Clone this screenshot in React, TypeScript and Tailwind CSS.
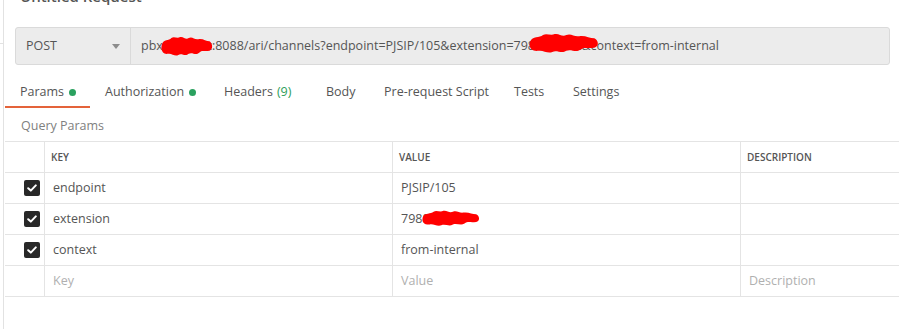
import React from 'react';

const tabs = [
  { label: 'Params', dot: true, w: 'w-[85px]', active: true },
  { label: 'Authorization', dot: true, w: 'w-[119px]' },
  { label: 'Headers', count: '(9)', w: 'w-[102px]' },
  { label: 'Body', w: 'w-[58px]' },
  { label: 'Pre-request Script', w: 'w-[130px]' },
  { label: 'Tests', w: 'w-[59px]' },
  { label: 'Settings', w: 'w-[90px]' },
];

const rows = [
  { key: 'endpoint', value: 'PJSIP/105' },
  { key: 'extension', value: '7988', redacted: true },
  { key: 'context', value: 'from-internal' },
];

function Scribble({ className }: { className: string }) {
  return (
    <svg className={className} viewBox="0 0 60 20" preserveAspectRatio="none">
      <path
        d="M1 8 C3 3 9 5 12 2 C15 0 19 3 22 1 C26 0 28 4 32 2 C36 0 39 4 43 3 C48 2 52 5 56 5 C60 7 60 13 56 14 C50 15 47 13 44 16 C40 19 36 15 32 17 C28 20 24 16 20 18 C16 20 12 16 8 17 C3 18 -1 14 1 8 Z"
        fill="#ff0000"
      />
    </svg>
  );
}

function Check() {
  return (
    <div className="w-4 h-4 rounded-[2px] bg-[#282828] flex items-center justify-center">
      <svg width="10" height="8" viewBox="0 0 10 8">
        <path d="M1.2 4.2 L3.8 6.6 L8.8 1.4" stroke="#fff" strokeWidth="2" fill="none" strokeLinecap="round" strokeLinejoin="round" />
      </svg>
    </div>
  );
}

export default function App() {
  return (
    <div className="w-[899px] h-[329px] overflow-hidden bg-white font-['Open_Sans',_sans-serif] text-[#555555] relative">
      {/* left pane edge */}
      <div className="absolute left-0 top-[43px] w-[4px] border-t border-[#e2e2e2]" />
      <div className="ml-[3px] h-full border-l border-[#e2e2e2] pl-[1px]">
        {/* title, scrolled mostly out of view */}
        <div className="h-[27px] overflow-hidden">
          <div className="-mt-[14px] pl-[15px] text-[15px] font-semibold leading-[20px]">Untitled Request</div>
        </div>

        {/* url bar */}
        <div className="relative ml-[10px] w-[875px] h-[38px] flex bg-[#ececec] border border-[#dadada] rounded-[3px] text-[12.5px]">
          <div className="w-[115px] flex items-center justify-between pl-[10px] pr-[10px] border-r border-[#dadada]">
            <span>POST</span>
            <svg width="8" height="5" viewBox="0 0 8 5">
              <path d="M0 0 H8 L4 5 Z" fill="#8c8c8c" />
            </svg>
          </div>
          <div className="flex items-center pl-[10px] whitespace-nowrap">
            pbx.xxxxxxx:8088/ari/channels?endpoint=PJSIP/105&amp;extension=7988xxxxxx&amp;context=from-internal
          </div>
          <Scribble className="absolute left-[145px] top-[8px] w-[52px] h-[21px]" />
          <Scribble className="absolute left-[513px] top-[5px] w-[70px] h-[21px]" />
        </div>

        {/* tabs */}
        <div className="flex h-[43px] pt-[14px] text-[12.5px]">
          {tabs.map((t) => (
            <div key={t.label} className={`${t.w} shrink-0 flex flex-col`}>
              <div className="flex-1 flex items-center pl-[15px] gap-[5px] whitespace-nowrap">
                <span>{t.label}</span>
                {t.dot && <span className="w-[7px] h-[7px] rounded-full bg-[#2aa15f]" />}
                {t.count && <span className="text-[#2e9e5b] -ml-[1px]">{t.count}</span>}
              </div>
              <div className={`h-[2px] ${t.active ? 'bg-[#e4633a]' : ''}`} />
            </div>
          ))}
        </div>

        {/* query params label */}
        <div className="h-[33px] flex items-center pl-[16px] pt-[3px] text-[12.5px] text-[#808080]">Query Params</div>

        {/* table */}
        <div className="border-t border-[#e4e4e4] text-[12.5px]">
          <div className="flex h-[31px] border-b border-[#e4e4e4]">
            <div className="w-[40px] border-r border-[#e4e4e4]" />
            <div className="w-[348px] border-r border-[#e4e4e4] flex items-center pl-[6px] text-[10px] font-semibold">KEY</div>
            <div className="w-[348px] border-r border-[#e4e4e4] flex items-center pl-[6px] text-[10px] font-semibold">VALUE</div>
            <div className="flex-1 flex items-center pl-[6px] text-[10px] font-semibold">DESCRIPTION</div>
          </div>
          {rows.map((r) => (
            <div key={r.key} className="flex h-[31px] border-b border-[#e4e4e4]">
              <div className="w-[40px] border-r border-[#e4e4e4] flex items-center justify-end pr-[4px]">
                <Check />
              </div>
              <div className="w-[348px] border-r border-[#e4e4e4] flex items-center pl-[8px]">{r.key}</div>
              <div className="relative w-[348px] border-r border-[#e4e4e4] flex items-center pl-[8px]">
                {r.value}
                {r.redacted && <Scribble className="absolute left-[29px] top-[6px] w-[58px] h-[17px]" />}
              </div>
              <div className="flex-1" />
            </div>
          ))}
          <div className="flex h-[31px] border-b border-[#e4e4e4] text-[#b0b0b0]">
            <div className="w-[40px] border-r border-[#e4e4e4]" />
            <div className="w-[348px] border-r border-[#e4e4e4] flex items-center pl-[8px]">Key</div>
            <div className="w-[348px] border-r border-[#e4e4e4] flex items-center pl-[8px]">Value</div>
            <div className="flex-1 flex items-center pl-[8px]">Description</div>
          </div>
        </div>
      </div>
    </div>
  );
}
